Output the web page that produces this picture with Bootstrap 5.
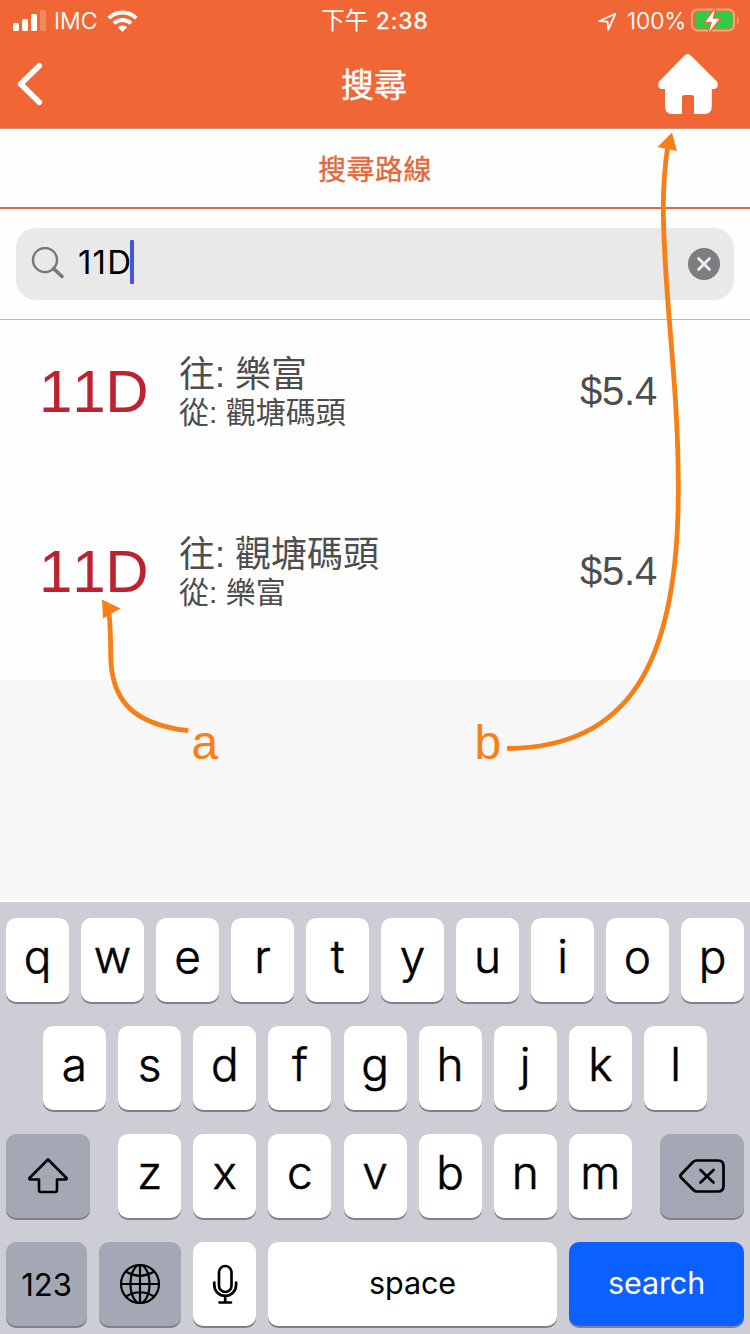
<!DOCTYPE html>
<html lang="zh-Hant">
<head>
<meta charset="utf-8">
<meta name="viewport" content="width=device-width, initial-scale=1">
<title>搜尋路線</title>
<link href="https://cdn.jsdelivr.net/npm/bootstrap@5.3.0/dist/css/bootstrap.min.css" rel="stylesheet">
<style>
  body { font-family: Inter, "Noto Sans CJK TC", sans-serif; background: #f7f7f7; width: 750px; height: 1334px; overflow: hidden; color: #000; }
  svg { display: block; flex: none; }
  .phone { width: 750px; height: 1334px; }
  .top-bar { background: #f06634; height: 129px; border-bottom: 1px solid #c3917c; color: #fff; }
  .bar-grid { grid-template-columns: 250px 250px 250px; }
  .status { height: 40px; font-size: 23px; line-height: 41px; white-space: nowrap; }
  .carrier { font-weight: 300; font-size: 23px; width: 52px; -webkit-text-stroke: .25px #fff; padding-top: 1px; }
  .percent { width: 66px; }
  .clock { font-weight: 400; font-size: 23px; letter-spacing: 1px; -webkit-text-stroke: .4px #fff; }
  .clock-cjk { font-size: 23.5px; letter-spacing: 0; -webkit-text-stroke: 0; }
  .title-row { height: 88px; }
  .page-title { font-size: 33px; font-weight: 400; -webkit-text-stroke: .4px #fff; line-height: 91px; margin-left: -2px !important; }
  .tab-strip { height: 80px; background: #fefefe; border-bottom: 2px solid #dc6a40; color: #e2673b; font-size: 28px; font-weight: 400; -webkit-text-stroke: .35px #e2673b; letter-spacing: .4px; line-height: 82px; box-shadow: 0 1px 0 #a8786a; }
  .search-area { height: 111px; background: #fefefe; border-bottom: 1px solid #b9b9b9; padding: 19px 16px 0; }
  .search-box { height: 72px; background: #e9e9e9; border-radius: 20px; padding: 0 14px 0 15px; font-size: 33px; }
  .query { margin: -4px 0 0 13px; line-height: 68px; letter-spacing: 1.2px; font-kerning: none; }
  .caret { width: 4px; height: 44px; background: #4257d6; border-radius: 1px; margin: -4px 0 0 -2px; }
  .route { height: 180px; background: #fefefe; font-family: "Liberation Sans", "Noto Sans CJK TC", sans-serif; color: #4d4d4d; padding-left: 39px; }
  .route-no { color: #be2130; font-size: 60px; line-height: 143px; width: 140px; font-kerning: none; letter-spacing: -.2px; }
  .dest { font-size: 36px; line-height: 44px; }
  .orig { font-size: 30px; line-height: 31px; }
  .stops { padding-top: 33px; width: 401px; white-space: nowrap; }
  .fare { font-size: 40px; line-height: 142px; letter-spacing: -.2px; }
  .blank { height: 222px; border-bottom: 2px solid #fbfbfd; }
  .keyboard { height: 432px; background: #cccdd5; padding: 16px 6px 0; }
  .key-row { height: 84px; margin-bottom: 24px; gap: 12px; }
  .letters { gap: 12.130px; }
  .key { width: 63px; height: 84px; flex: none; background: #fff; border-radius: 10px; box-shadow: 0 2px 0 #7f8186; font-size: 46px; font-weight: 300; -webkit-text-stroke: .55px #000; line-height: 77px; text-align: center; padding: 0; }
  .key-dark { background: #a3a8b4; }
  .key-text { font-size: 31px; line-height: 85px; font-weight: 400; -webkit-text-stroke: 0; }
  .key-word { font-size: 30.5px; line-height: 82px; letter-spacing: -.1px; }
  .key-blue { background: #0b60ff; color: #fff; }
  .w81 { width: 81px; } .w82 { width: 82px; } .w84 { width: 84px; } .w175 { width: 175px; } .w289 { width: 289px; }
  .notes { z-index: 5; pointer-events: none; font-family: "Liberation Sans", sans-serif; font-size: 48px; }
</style>
</head>
<body>
<main class="phone position-relative d-flex flex-column">
  <header class="top-bar">
    <div class="status bar-grid d-grid">
      <div class="d-flex align-items-center">
        <svg width="54" height="40" viewBox="0 0 54 40" fill="#fff"><rect x="13" y="22" width="6" height="8" rx="1.6"/><rect x="22" y="18" width="6" height="12" rx="1.6"/><rect x="31" y="13" width="6" height="17" rx="1.6"/><rect x="40" y="9" width="6" height="21" rx="1.6" opacity=".22"/></svg>
        <span class="carrier">IMC</span>
        <svg width="34" height="40" viewBox="0 0 34 40" fill="none" stroke="#fff" stroke-width="4"><path d="M2.8 17.2a19.4 19.4 0 0 1 27.4 0"/><path d="M8 22.4a12.1 12.1 0 0 1 17 0"/><path fill="#fff" stroke="none" d="M11.8 26.3a6.8 6.8 0 0 1 9.4 0L16.5 31z"/></svg>
      </div>
      <div class="text-center clock"><span class="clock-cjk">下午</span> 2:38</div>
      <div class="d-flex align-items-center justify-content-end">
        <svg width="24" height="40" viewBox="0 0 24 40" fill="none" stroke="#fff" stroke-width="1.8" stroke-linejoin="round"><path d="M3 20.200 19.300 12.800 12.300 28.700l-.8-8z"/></svg>
        <span class="carrier percent text-end">100%</span>
        <svg width="64" height="40" viewBox="0 0 64 40"><rect x="6" y="8.500" width="42" height="21" rx="5.500" fill="none" stroke="#fff" stroke-opacity=".42" stroke-width="2"/><rect x="9" y="10.500" width="37.500" height="17" rx="3" fill="#30cd42"/><path d="M51 16c2.400 1 2.400 6 0 7z" fill="#fff" opacity=".42"/><path d="M29 8 19.500 21h6.500l-3 10L33.500 17.700h-6.800z" fill="#fff" stroke="#f06634" stroke-width="2.500" paint-order="stroke"/></svg>
      </div>
    </div>
    <div class="title-row bar-grid d-grid">
      <svg width="60" height="88" viewBox="0 0 60 88" fill="none" stroke="#fff" stroke-width="5.600" stroke-linecap="round" stroke-linejoin="round"><path d="M39.300 25.700 20.700 44l18.600 18.200"/></svg>
      <h1 class="page-title text-center m-0">搜尋</h1>
      <svg class="ms-auto" width="100" height="88" viewBox="0 0 100 88" fill="#fff"><path d="M34.500 15.500q3.200-3 6.400 0L66.500 41q2 2.200 1.300 5-1 3-4.300 3h-1.700v17.500q0 7.500-7.500 7.500H44V57.500q0-2.500-2.500-2.500h-7q-2.500 0-2.500 2.500V74h-9.500q-7.500 0-7.500-7.500V49h-3q-3 0-3.800-3-.5-3 1.300-5z"/></svg>
    </div>
  </header>
  <div class="tab-strip text-center">搜尋路線</div>
  <div class="search-area">
    <div class="search-box d-flex align-items-center">
      <svg width="34" height="34" viewBox="0 0 34 34" fill="none" stroke="#78787b"><circle cx="14" cy="13" r="12" stroke-width="2.400"/><path d="m22.500 21.500 8.500 8" stroke-width="3.600" stroke-linecap="round"/></svg>
      <span class="query">11D</span><span class="caret"></span>
      <svg class="ms-auto" width="32" height="32" viewBox="0 0 32 32"><circle cx="16" cy="16" r="16" fill="#7e7e82"/><path d="m10.500 10.500 11 11m0-11-11 11" stroke="#f2f2f2" stroke-width="2.800" stroke-linecap="round"/></svg>
    </div>
  </div>
  <section>
    <div class="route d-flex">
      <div class="route-no">11D</div>
      <div class="stops"><div class="dest">往: 樂富</div><div class="orig">從: 觀塘碼頭</div></div>
      <div class="fare">$5.4</div>
    </div>
    <div class="route d-flex">
      <div class="route-no">11D</div>
      <div class="stops"><div class="dest">往: 觀塘碼頭</div><div class="orig">從: 樂富</div></div>
      <div class="fare">$5.4</div>
    </div>
  </section>
  <div class="blank"></div>
  <section class="keyboard">
    <div class="key-row d-flex justify-content-center">
      <div class="key">q</div><div class="key">w</div><div class="key">e</div><div class="key">r</div><div class="key">t</div><div class="key">y</div><div class="key">u</div><div class="key">i</div><div class="key">o</div><div class="key">p</div>
    </div>
    <div class="key-row letters d-flex justify-content-center">
      <div class="key">a</div><div class="key">s</div><div class="key">d</div><div class="key">f</div><div class="key">g</div><div class="key">h</div><div class="key">j</div><div class="key">k</div><div class="key">l</div>
    </div>
    <div class="key-row d-flex justify-content-between">
      <div class="key key-dark w84"><svg width="84" height="84" viewBox="0 0 84 84" fill="none" stroke="#000" stroke-width="2.600" stroke-linejoin="round"><path d="M42 25.500 23.500 44q-.8 1.500 1 1.500H33V56q0 2 2 2h14q2 0 2-2V45.500h8.500q1.800 0 1-1.500z"/></svg></div>
      <div class="letters d-flex"><div class="key">z</div><div class="key">x</div><div class="key">c</div><div class="key">v</div><div class="key">b</div><div class="key">n</div><div class="key">m</div></div>
      <div class="key key-dark w84"><svg width="84" height="84" viewBox="0 0 84 84" fill="none" stroke="#000" stroke-width="2.700" stroke-linejoin="round" stroke-linecap="round"><path d="M36.500 26.500H58q5.500 0 5.500 5.500v20q0 5.500-5.500 5.500H37q-2 0-3.500-1.500L21 43.500q-1.300-1.500 0-3L33 28q1.500-1.500 3.500-1.500z"/><path d="m40.500 36 13 12.500m0-12.500-13 12.500"/></svg></div>
    </div>
    <div class="key-row d-flex">
      <div class="key key-dark key-text w81">123</div>
      <div class="key key-dark w82"><svg width="82" height="84" viewBox="0 0 82 84" fill="none" stroke="#000" stroke-width="2.200"><circle cx="41" cy="42" r="19"/><ellipse cx="41" cy="42" rx="9.500" ry="19"/><path d="M41 23v38M22 42h38M27 29.500q14 8.500 28 0M27 54.500q14-8.500 28 0"/></svg></div>
      <div class="key"><svg width="63" height="84" viewBox="0 0 63 84" fill="none" stroke="#000" stroke-width="2.700" stroke-linecap="round"><rect x="26" y="24" width="12.500" height="26" rx="6.250"/><path d="M21.300 40.500v2.500a10.900 10.900 0 0 0 21.800 0v-2.500M32.200 54v6M26.500 60.500h11.500"/></svg></div>
      <div class="key key-text key-word w289">space</div>
      <div class="key key-blue key-text key-word w175">search</div>
    </div>
  </section>
  <svg class="notes position-absolute top-0 start-0" width="750" height="800" viewBox="0 0 750 800" fill="#f77f15">
    <g fill="none" stroke="#f77f15" stroke-width="4.800">
      <path d="M188.300 730.700C132 724 111 700 110.700 655C110.500 640 110.700 628 109 614"/>
      <path d="M507 748.500C628 748 679 665 678.300 487C678.500 380 663 290 663.300 205C663.500 185 665 165 667.500 148"/>
    </g>
    <path d="m102 599.500 18.500 9-17.500 10zM672 132.500l-14.500 14.500 19.500 4z"/>
    <text x="191.500" y="759">a</text><text x="474.500" y="759">b</text>
  </svg>
</main>
<script src="https://cdn.jsdelivr.net/npm/bootstrap@5.3.0/dist/js/bootstrap.bundle.min.js"></script>
</body>
</html>
